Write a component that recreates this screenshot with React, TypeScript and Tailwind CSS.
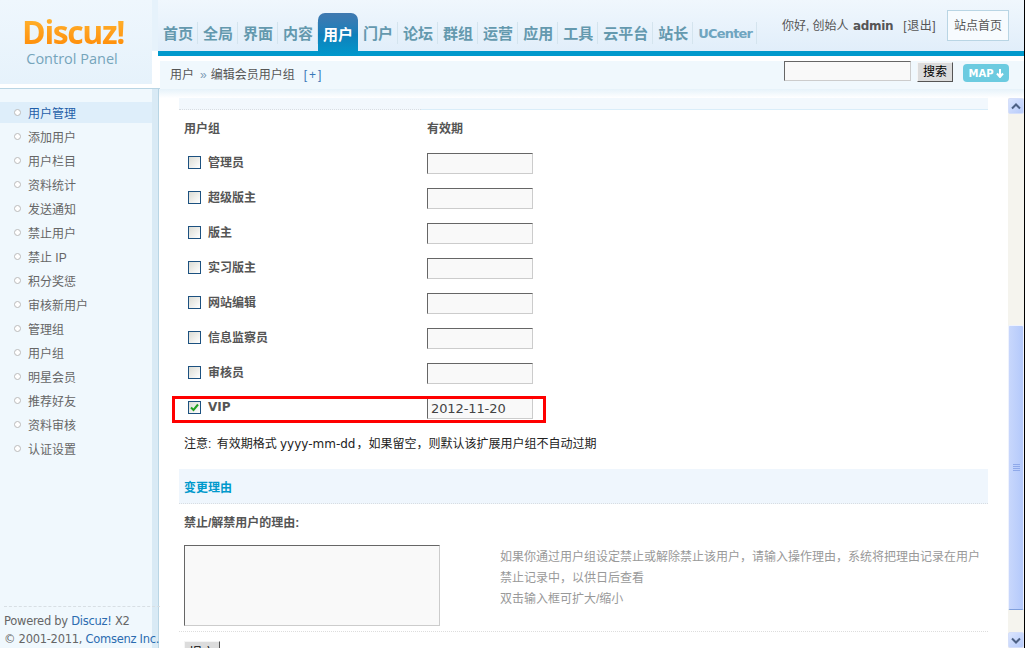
import React from 'react'

const font = '[font-family:"Liberation_Sans","Noto_Sans_CJK_SC",sans-serif]'

const navItems = ['首页', '全局', '界面', '内容', '用户', '门户', '论坛', '群组', '运营', '应用', '工具', '云平台', '站长']
const sideItems = ['用户管理', '添加用户', '用户栏目', '资料统计', '发送通知', '禁止用户', '禁止 IP', '积分奖惩', '审核新用户', '管理组', '用户组', '明星会员', '推荐好友', '资料审核', '认证设置']
const groups = ['管理员', '超级版主', '版主', '实习版主', '网站编辑', '信息监察员', '审核员']

function Checkbox({ checked }: { checked?: boolean }) {
  return (
    <span className="w-[13px] h-[13px] border border-[#1c5180] bg-gradient-to-br from-[#dcdcd4] to-white flex items-center justify-center shrink-0">
      {checked && (
        <svg width="9" height="9" viewBox="0 0 9 9">
          <path d="M1 4.5 L3.5 7 L8 1.5" fill="none" stroke="#21a121" strokeWidth="2" />
        </svg>
      )}
    </span>
  )
}

function DateInput({ value }: { value?: string }) {
  return (
    <input
      readOnly
      value={value ?? ''}
      className="w-[106px] h-[21px] px-[3px] bg-[#f9f9f9] border border-t-[#666] border-l-[#666] border-r-[#ccc] border-b-[#ccc] text-[13px] font-normal text-[#444] [font-family:'DejaVu_Sans',sans-serif] tracking-[-0.1px] outline-none"
    />
  )
}

function ScrollArrow({ up }: { up?: boolean }) {
  return (
    <div className="w-[16px] h-[16px] bg-gradient-to-br from-[#dbe5fe] to-[#b7cbfa] border border-[#d5dffa] rounded-[2px] flex items-center justify-center shrink-0">
      <svg width="10" height="7" viewBox="0 0 10 7">
        <path d={up ? 'M1 5.5 L5 1.5 L9 5.5' : 'M1 1.5 L5 5.5 L9 1.5'} fill="none" stroke="#4d6185" strokeWidth="2" />
      </svg>
    </div>
  )
}

export default function App() {
  return (
    <div className={`${font} w-[1025px] h-[648px] overflow-hidden flex bg-black text-[12px] text-[#666]`}>
      <div className="w-[1024px] h-full flex flex-col bg-white shrink-0">
        <header className="h-[89px] shrink-0 flex border-b border-[#b9d5e4] bg-white">
          <div className="w-[152px] h-[84px] shrink-0 bg-gradient-to-b from-[#eff7fd] to-[#e6f2fb] flex flex-col items-center pt-[15px]">
            <div className="text-[32px] leading-[34px] font-bold tracking-[-1.4px] bg-gradient-to-b from-[#ffb52e] to-[#ff8a00] bg-clip-text text-transparent [font-family:'Open_Sans',sans-serif] -ml-[6px]">Discuz!</div>
            <div className="text-[14.5px] leading-[18px] mt-[1px] text-[#76a5bb] [font-family:'Open_Sans',sans-serif] ml-[-8px]">Control Panel</div>
          </div>
          <div className="w-[6px] h-[51px] bg-[#e6f2fb] shrink-0" />
          <div className="flex-1 flex flex-col">
            <div className="h-[56px] shrink-0 flex bg-gradient-to-b from-[#f0f7fd] to-[#e1eefa] border-b-[5px] border-[#0099cc] relative">
              <nav className="flex items-end">
                {navItems.map((item) => item === '用户' ? (
                  <a key={item} className="relative -mb-[5px] h-[43px] w-[40px] rounded-t-[7px] bg-gradient-to-b from-[#4079b0] via-[#0f7fba] to-[#0099cc] text-white font-bold text-[15px] text-center pt-[11px] leading-[22px]">{item}</a>
                ) : (
                  <a key={item} className="h-[38px] pb-[7px] pt-[9px] flex">
                    <span className="pl-[5px] pr-[4px] pt-[2px] border-r border-[#d4e4ee] text-[15px] leading-[20px] font-bold text-[#6499ae] whitespace-nowrap">{item}</span>
                  </a>
                ))}
                <a className="h-[38px] pb-[7px] pt-[9px] flex">
                  <span className="w-[64px] pl-[5px] pt-[2px] border-r border-[#d4e4ee] text-[13px] leading-[20px] font-bold text-[#6fa5c0] [font-family:'DejaVu_Sans',sans-serif] tracking-[-0.8px] whitespace-nowrap">UCenter</span>
                </a>
              </nav>
              <div className="ml-auto flex items-start pt-[10px] pr-[15px]">
                <div className="flex items-center h-[30px] mr-[11px] gap-[10px] text-[#555] pt-[1px]">
                  <span>你好, 创始人 <b className="[font-family:'DejaVu_Sans',sans-serif] text-[#555] tracking-[-0.3px] ml-[1px]">admin</b></span>
                  <span className="tracking-[0.5px]">[退出]</span>
                </div>
                <a className="w-[62px] h-[31px] border border-[#b9d5e4] bg-[#f7fbfe] flex items-center justify-center text-[#555]">站点首页</a>
              </div>
            </div>
            <div className="h-[5px] shrink-0" />
            <div className="flex-1 ml-[2px] bg-[#f0f8fd] flex items-center pl-[10px] pr-[15px] text-[#555]">
              <span className="-mt-[2px]">用户</span>
              <span className="ml-[6px] mr-[4px] text-[#7c9bb5] -mt-[2px]">»</span>
              <span className="-mt-[2px]">编辑会员用户组</span>
              <span className="ml-[9px] text-[#3a78b8] tracking-[2px] -mt-[2px]">[+]</span>
              <input readOnly className="ml-auto mb-[9px] w-[127px] h-[20px] bg-[#f9f9f9] border border-t-[#666] border-l-[#666] border-r-[#ccc] border-b-[#ccc] outline-none" />
              <button className="ml-[6px] mb-[7px] w-[36px] h-[20px] bg-[#dcdcdc] border border-t-[#f5f5f5] border-l-[#f5f5f5] border-r-[#555] border-b-[#555] text-black text-[12px] leading-none">搜索</button>
              <span className="ml-[10px] mb-[5px] w-[46px] h-[18px] rounded-[4px] bg-[#6ccbe0] text-white font-bold text-[10px] flex items-center justify-center gap-[2px] [font-family:'DejaVu_Sans',sans-serif]">
                MAP
                <svg width="8" height="9" viewBox="0 0 8 9"><path d="M4 0 V7 M1 4.5 L4 8 L7 4.5" fill="none" stroke="#fff" strokeWidth="2" /></svg>
              </span>
            </div>
          </div>
        </header>

        <div className="flex-1 flex min-h-0">
          <aside className="w-[152px] shrink-0 bg-[#f0f8fd] flex flex-col pt-[13px]">
            <ul className="flex flex-col gap-[3px]">
              {sideItems.map((item, i) => (
                <li key={item} className={`h-[21px] flex items-center pl-[14px] ${i === 0 ? 'bg-[#deeefa] text-[#1f5ea8]' : 'text-[#666]'}`}>
                  <span className="w-[7px] h-[7px] rounded-full border border-[#bbb] bg-white mr-[7px]" />
                  <span className="pt-[2px]">{item}</span>
                </li>
              ))}
            </ul>
            <div className="mt-auto h-[42px] ml-[4px] w-[156px] border-t border-dashed border-[#d8dfe4] pt-[5px] leading-[18px] whitespace-nowrap text-[#666] relative z-10 [font-family:'DejaVu_Sans',sans-serif] text-[11.5px] tracking-[-0.28px]">
              <div>Powered by <span className="text-[#2b6cb0]">Discuz!</span> X2</div>
              <div>© 2001-2011, <span className="text-[#2b6cb0]">Comsenz Inc.</span></div>
            </div>
          </aside>
          <div className="w-[6px] shrink-0 bg-[#d9eaf5]" />
          <div className="w-px shrink-0 bg-[#b9d5e4]" />

          <div className="flex-1 flex flex-col min-w-0">
            <div className="h-[9px] shrink-0 bg-gradient-to-b from-[#e6f2fa] to-white" />
            <div className="flex-1 flex min-h-0">
              <main className="flex-1 overflow-hidden pl-[20px] pr-[20px] min-w-0">
                <div className="h-[12px] flex bg-[#f2f8fd]">
                  <div className="w-[242px] border-b border-dotted border-[#d8dde2]" />
                  <div className="flex-1 border-b border-[#d9edf9]" />
                </div>
                <div className="h-[35px] flex items-center font-bold text-[#555] pt-[3px]">
                  <div className="w-[243px] pl-[5px]">用户组</div>
                  <div className="pl-[5px]">有效期</div>
                </div>
                {groups.map((g) => (
                  <div key={g} className="h-[35px] flex items-center font-bold text-[#555]">
                    <div className="w-[243px] pl-[9px] flex items-center gap-[7px]">
                      <Checkbox />
                      {g}
                    </div>
                    <div className="pl-[5px] pt-[1px] flex"><DateInput /></div>
                  </div>
                ))}
                <div className="h-[35px] flex items-center font-bold text-[#555] relative">
                  <div className="w-[243px] pl-[9px] flex items-center gap-[7px] -mt-[1px]">
                    <Checkbox checked />
                    <span className="[font-family:'DejaVu_Sans',sans-serif]">VIP</span>
                  </div>
                  <div className="pl-[5px] pt-[1px] flex"><DateInput value="2012-11-20" /></div>
                  <div className="absolute left-[-7px] top-[6px] w-[374px] h-[27px] border-[3px] border-[#f00]" />
                </div>
                <div className="h-[44px] pl-[5px] pb-[6px] flex items-center text-[#222] whitespace-pre">注意: <span className="ml-[2px]">有效期格式 </span><span className="[font-family:'DejaVu_Sans',sans-serif] mr-[1px]">yyyy-mm-dd</span>，如果留空，则默认该扩展用户组不自动过期</div>
                <div className="h-[35px] pl-[5px] pt-[3px] flex items-center bg-[#eff6fd] border-b border-dotted border-[#d8dde2] font-bold text-[#0099cc]">变更理由</div>
                <div className="h-[36px] pl-[5px] pt-[2px] flex items-center font-bold text-[#555]">禁止/解禁用户的理由:</div>
                <div className="pt-[5px] pb-[5px] pl-[5px] flex border-b border-dotted border-[#ddd]">
                  <textarea readOnly className="w-[256px] h-[81px] bg-[#f9f9f9] border border-t-[#666] border-l-[#666] border-r-[#ccc] border-b-[#ccc] outline-none resize-none shrink-0" />
                  <div className="ml-[60px] pt-[2px] leading-[21px] text-[#999] whitespace-nowrap">
                    <div>如果你通过用户组设定禁止或解除禁止该用户，请输入操作理由，系统将把理由记录在用户</div>
                    <div>禁止记录中，以供日后查看</div>
                    <div>双击输入框可扩大/缩小</div>
                  </div>
                </div>
                <div className="pl-[5px] pt-[9px]">
                  <button className="w-[36px] h-[22px] bg-[#dcdcdc] border border-t-[#f5f5f5] border-l-[#f5f5f5] border-r-[#555] border-b-[#555] text-black text-[13px] leading-none">提交</button>
                </div>
              </main>
              <div className="w-[16px] shrink-0 bg-[#f5f4ee] flex flex-col">
                <ScrollArrow up />
                <div className="h-[211px] shrink-0" />
                <div className="h-[285px] shrink-0 rounded-[2px] bg-gradient-to-r from-[#c8d7fc] to-[#b4c9fb] border border-[#eef2fe] border-b-[#7f9fdc] flex flex-col items-center justify-center gap-[1px]">
                  <span className="w-[7px] h-px bg-[#8fa9ea]" />
                  <span className="w-[7px] h-px bg-[#8fa9ea]" />
                  <span className="w-[7px] h-px bg-[#8fa9ea]" />
                  <span className="w-[7px] h-px bg-[#8fa9ea]" />
                </div>
                <div className="flex-1" />
                <ScrollArrow />
              </div>
            </div>
          </div>
        </div>
      </div>
    </div>
  )
}
